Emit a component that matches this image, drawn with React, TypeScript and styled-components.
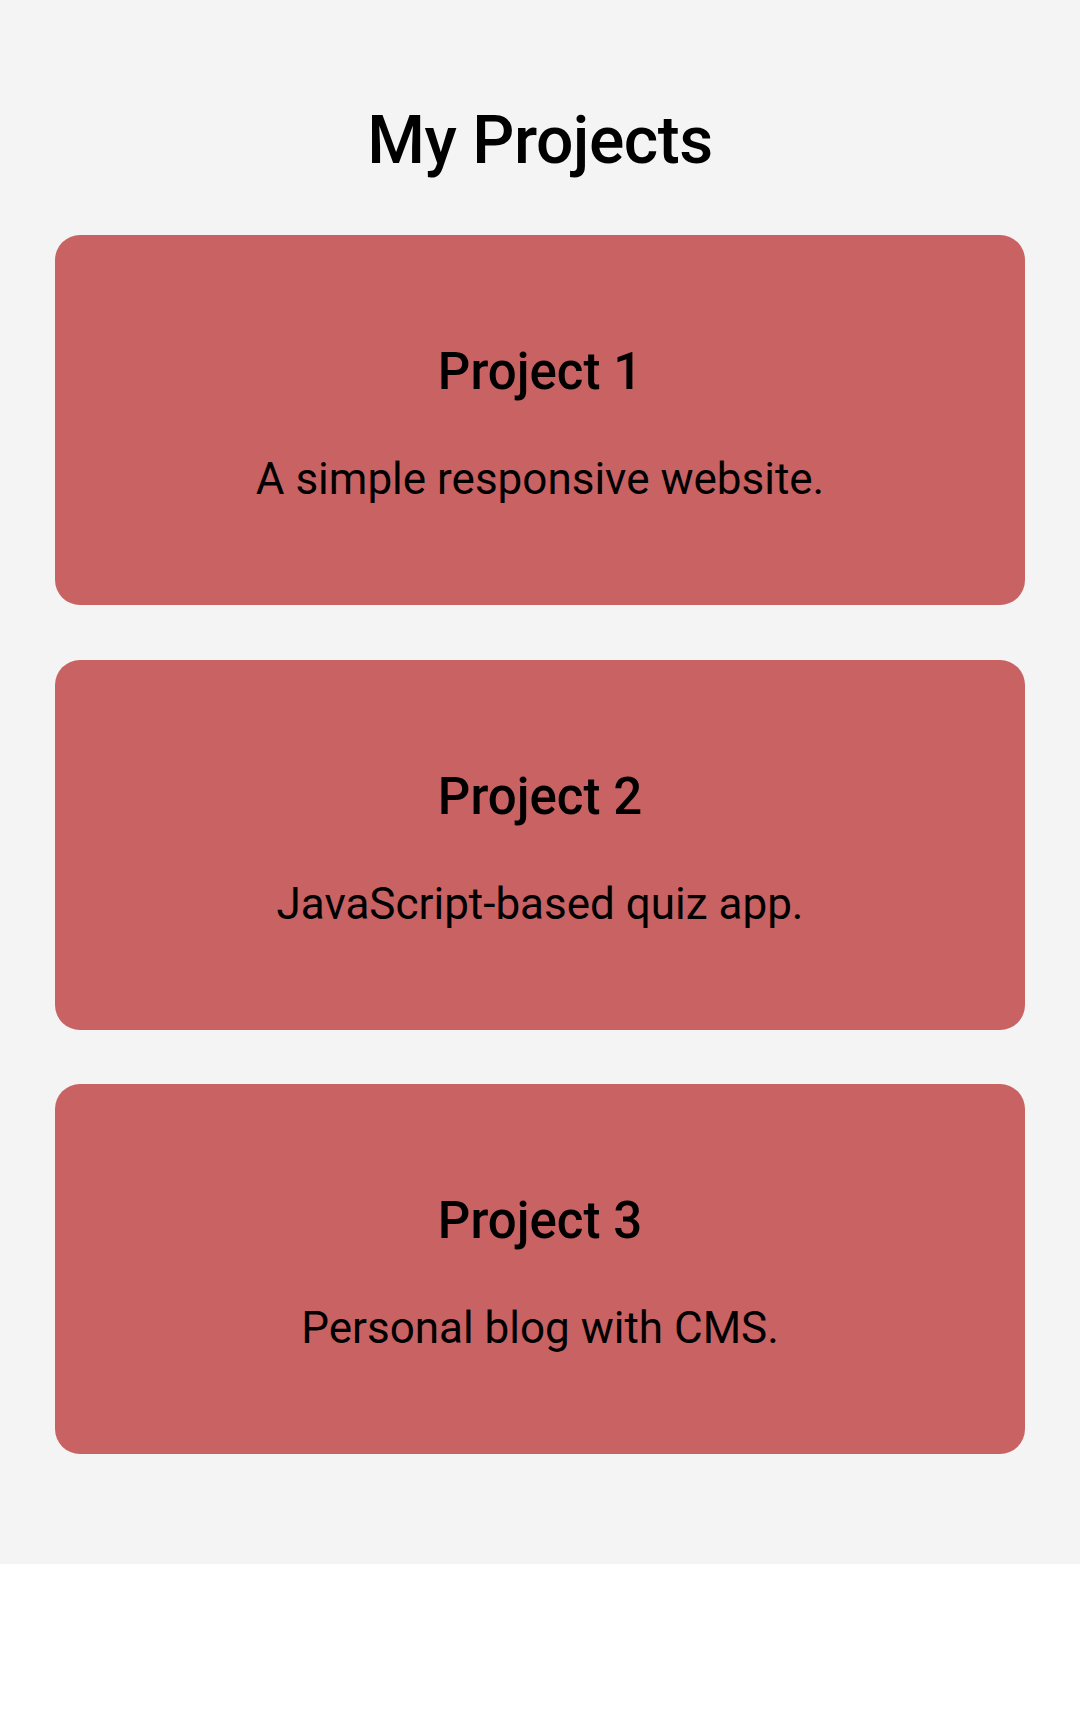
import React from "react";
import styled, { createGlobalStyle } from "styled-components";

const GlobalStyle = createGlobalStyle`
  html, body {
    margin: 0;
    padding: 0;
    background: #ffffff;
    font-family: Roboto, "Noto Sans", "Liberation Sans", sans-serif;
    color: #000000;
  }
`;

const Page = styled.section`
  background: #f4f4f4;
  padding: 100px 55px 110px;
  display: flex;
  flex-direction: column;
`;

const Title = styled.h1`
  margin: 0 0 54px;
  font-size: 66px;
  line-height: 81px;
  font-weight: 500;
  letter-spacing: -0.5px;
  text-align: center;
`;

const CardList = styled.div`
  display: flex;
  flex-direction: column;
  gap: 54.5px;
`;

const Card = styled.article`
  background: #c96262;
  border-radius: 25px;
  padding: 108px 24px 100px;
  text-align: center;
`;

const CardTitle = styled.h2`
  margin: 0 0 52px;
  font-size: 51px;
  line-height: 58px;
  font-weight: 500;
`;

const CardText = styled.p`
  margin: 0;
  font-size: 44px;
  line-height: 52px;
  font-weight: 400;
`;

const projects = [
  { title: "Project 1", text: "A simple responsive website." },
  { title: "Project 2", text: "JavaScript-based quiz app." },
  { title: "Project 3", text: "Personal blog with CMS." },
];

export default function App() {
  return (
    <>
      <GlobalStyle />
      <Page>
        <Title>My Projects</Title>
        <CardList>
          {projects.map((p) => (
            <Card key={p.title}>
              <CardTitle>{p.title}</CardTitle>
              <CardText>{p.text}</CardText>
            </Card>
          ))}
        </CardList>
      </Page>
    </>
  );
}
